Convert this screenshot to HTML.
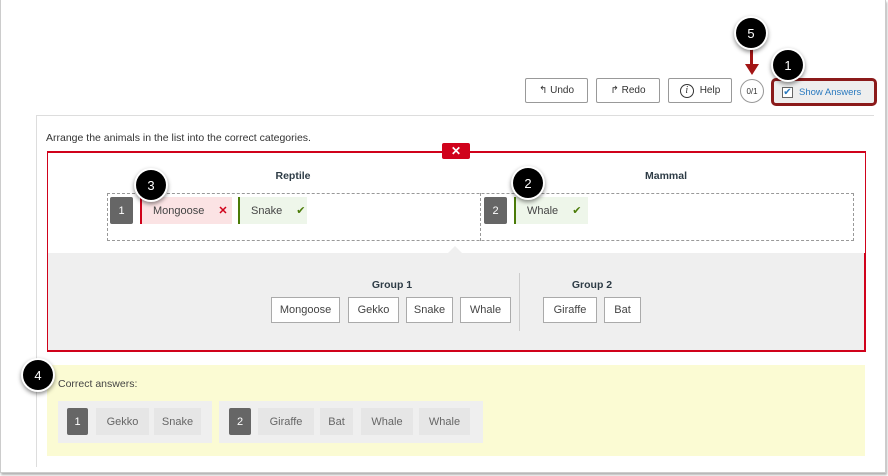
<!DOCTYPE html>
<html><head><style>
*{box-sizing:border-box;margin:0;padding:0}
body{width:888px;height:476px;background:#fff;position:relative;overflow:hidden;font-family:"Liberation Sans",sans-serif;color:#2d3b45}
.a{position:absolute}
.btn{position:absolute;border:1px solid #999;border-radius:2px;background:#fff;font-size:10px;color:#333;display:flex;align-items:center;justify-content:center;gap:6px}
.opt{position:absolute;top:297px;height:26px;border:1px solid #aaa;background:#fff;font-size:11px;color:#444;display:flex;align-items:center;justify-content:center}
.num{position:absolute;background:#666;color:#fff;font-size:11px;display:flex;align-items:center;justify-content:center;border-radius:2px}
.it{position:absolute;top:197px;height:27px;font-size:11px;color:#444;display:flex;align-items:center;padding-left:11px;gap:14px}
.ca{position:absolute;top:408px;height:27px;background:#e6e6e6;font-size:11px;color:#666;display:flex;align-items:center;justify-content:center}
.co{position:absolute;width:30px;height:30px;border-radius:50%;background:#000;color:#fff;font-size:13px;display:flex;align-items:center;justify-content:center;box-shadow:0 0 0 2px #fff,0 2px 4px 2px rgba(0,0,0,.45)}
.lbl{position:absolute;font-size:10.5px;font-weight:bold;color:#2d3b45;text-align:center}
</style></head><body>
<div class="a" style="left:0;top:0;width:886px;height:473px;border:1px solid #ccc;border-top:none;box-shadow:1px 2px 2px rgba(0,0,0,.3)"></div>
<div class="a" style="left:36px;top:115px;width:1px;height:352px;background:#ddd"></div>
<div class="a" style="left:36px;top:115px;width:838px;height:1px;background:#ddd"></div>

<div class="btn" style="left:525px;top:78px;width:63px;height:25px">↰ Undo</div>
<div class="btn" style="left:596px;top:78px;width:64px;height:25px">↱ Redo</div>
<div class="btn" style="left:668px;top:78px;width:64px;height:25px"><span style="display:inline-flex;width:14px;height:14px;border:1.3px solid #333;border-radius:50%;align-items:center;justify-content:center;font-style:italic;font-family:'Liberation Serif',serif;font-size:10px">i</span> Help</div>
<div class="a" style="left:740px;top:79px;width:24px;height:24px;border:1px solid #999;border-radius:50%;font-size:8px;display:flex;align-items:center;justify-content:center;color:#333">0/1</div>
<div class="a" style="left:771px;top:78px;width:106px;height:28px;border:3px solid #8b1a1a;border-radius:5px;background:#eee;font-size:9.5px;color:#2a7abf;display:flex;align-items:center;padding-left:8px;gap:6px"><span style="width:11px;height:11px;border:1px solid #666;background:#fff;color:#2a7abf;font-size:10px;line-height:9px;text-align:center">✔</span>Show Answers</div>
<div class="a" style="left:750px;top:47px;width:3px;height:20px;background:#a31515"></div>
<div class="a" style="left:745px;top:64px;width:0;height:0;border-left:7px solid transparent;border-right:7px solid transparent;border-top:11px solid #a31515"></div>

<div class="a" style="left:46px;top:132px;font-size:10.5px;color:#333">Arrange the animals in the list into the correct categories.</div>
<div class="a" style="left:47px;top:151px;width:819px;height:201px;border:1px solid #d0021b;border-top:2px solid #d0021b"></div>
<div class="a" style="left:442px;top:143px;width:28px;height:16px;background:#d0021b;border-radius:2px;color:#fff;font-size:12px;font-weight:bold;display:flex;align-items:center;justify-content:center">✕</div>
<div class="lbl" style="left:243px;top:170px;width:100px">Reptile</div>
<div class="lbl" style="left:616px;top:170px;width:100px">Mammal</div>
<div class="a" style="left:107px;top:193px;width:747px;height:48px;border:1px dashed #999"></div>
<div class="a" style="left:480px;top:193px;width:0;height:48px;border-left:1px dashed #999"></div>
<div class="num" style="left:110px;top:197px;width:23px;height:27px">1</div>
<div class="it" style="left:140px;width:92px;background:#fbe3e4;border-left:2px solid #d0021b">Mongoose <span style="color:#d0021b;font-weight:bold">✕</span></div>
<div class="it" style="left:238px;width:69px;background:#eef6ea;border-left:2px solid #4b7b08">Snake <span style="color:#4b7b08">✔</span></div>
<div class="num" style="left:484px;top:197px;width:23px;height:27px">2</div>
<div class="it" style="left:514px;width:74px;background:#eef6ea;border-left:2px solid #4b7b08">Whale <span style="color:#4b7b08">✔</span></div>

<div class="a" style="left:48px;top:253px;width:817px;height:98px;background:#efefef;border-right:1px solid #d0021b;border-bottom:1px solid #d0021b"></div>
<div class="a" style="left:448px;top:246px;width:0;height:0;border-left:7px solid transparent;border-right:7px solid transparent;border-bottom:7px solid #efefef"></div>
<div class="lbl" style="left:342px;top:279px;width:100px">Group 1</div>
<div class="lbl" style="left:542px;top:279px;width:100px">Group 2</div>
<div class="a" style="left:519px;top:273px;width:1px;height:58px;background:#ccc"></div>
<div class="opt" style="left:271px;width:69px">Mongoose</div>
<div class="opt" style="left:348px;width:51px">Gekko</div>
<div class="opt" style="left:406px;width:47px">Snake</div>
<div class="opt" style="left:460px;width:51px">Whale</div>
<div class="opt" style="left:543px;width:54px">Giraffe</div>
<div class="opt" style="left:604px;width:37px">Bat</div>

<div class="a" style="left:47px;top:365px;width:818px;height:91px;background:#fbfbd3"></div>
<div class="a" style="left:58px;top:378px;font-size:10.5px;color:#444">Correct answers:</div>
<div class="a" style="left:58px;top:401px;width:154px;height:42px;background:#efefef"></div>
<div class="a" style="left:219px;top:401px;width:264px;height:42px;background:#efefef"></div>
<div class="num" style="left:67px;top:408px;width:21px;height:27px">1</div>
<div class="ca" style="left:96px;width:53px">Gekko</div>
<div class="ca" style="left:154px;width:47px">Snake</div>
<div class="num" style="left:229px;top:408px;width:22px;height:27px">2</div>
<div class="ca" style="left:258px;width:56px">Giraffe</div>
<div class="ca" style="left:320px;width:33px">Bat</div>
<div class="ca" style="left:361px;width:52px">Whale</div>
<div class="ca" style="left:419px;width:51px">Whale</div>

<div class="co" style="left:736px;top:18px">5</div>
<div class="co" style="left:773px;top:50px">1</div>
<div class="co" style="left:136px;top:170px">3</div>
<div class="co" style="left:513px;top:168px">2</div>
<div class="co" style="left:23px;top:360px">4</div>
</body></html>
